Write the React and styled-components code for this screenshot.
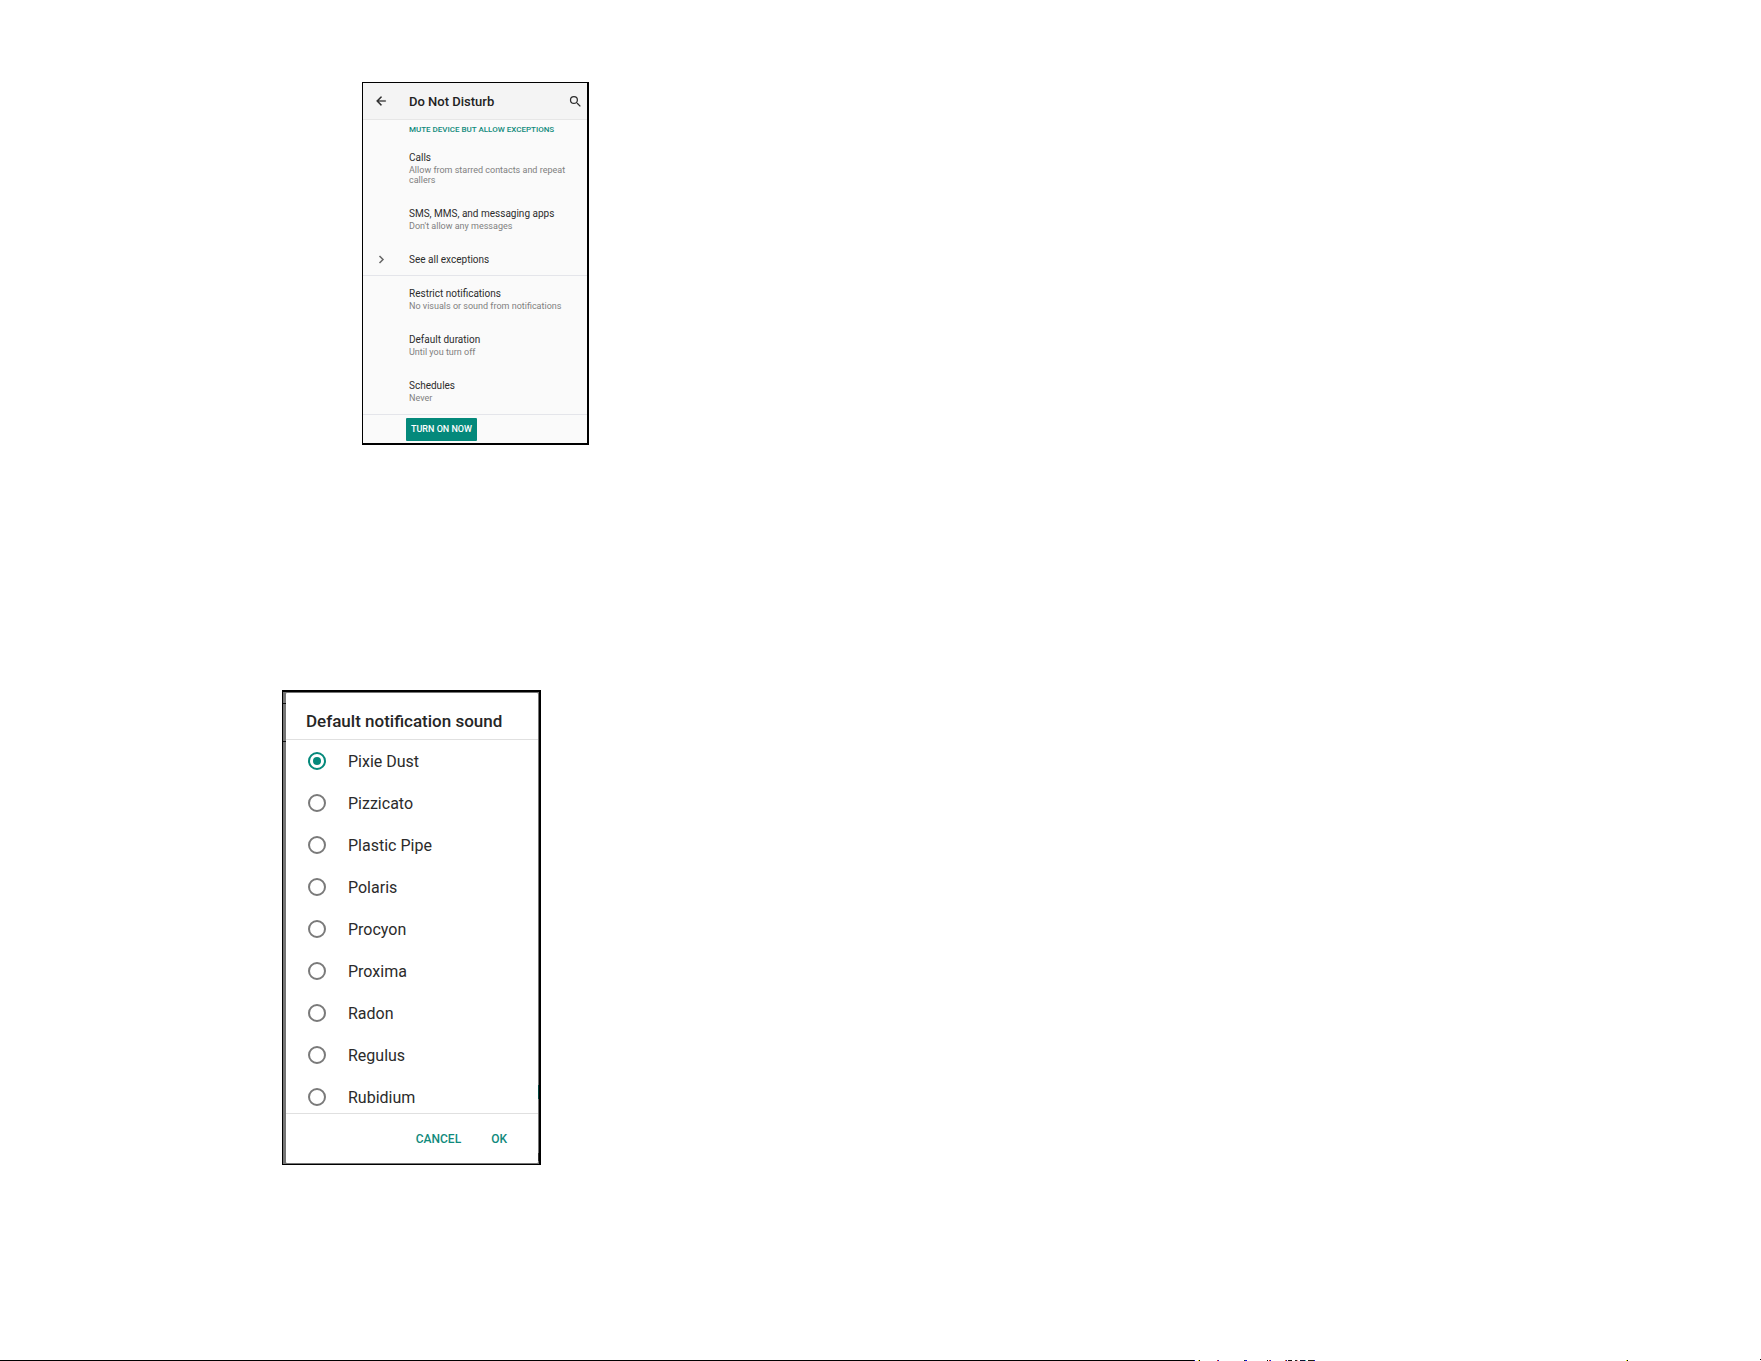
import React, { useState } from "react";
import styled, { createGlobalStyle } from "styled-components";

const GlobalStyle = createGlobalStyle`
  * { box-sizing: border-box; }
  body { margin: 0; background: #fff; font-family: Roboto, "Liberation Sans", sans-serif; }
`;

const Page = styled.main`
  display: flex;
  flex-direction: column;
  align-items: flex-start;
  min-height: 100vh;
  padding-top: 82px;
`;

const SettingsPanel = styled.section`
  width: 227px;
  margin-left: 362px;
  border: solid #000;
  border-width: 1px 2px 2px 1px;
  background: #fafafa;
  color: #2c2c2c;
`;

const AppBar = styled.header`
  display: flex;
  align-items: center;
  height: 37px;
  padding: 0 4px 0 11px;
  background: #f4f4f4;
  border-bottom: 1px solid #e6e6e6;
`;

const IconButton = styled.button`
  display: flex;
  padding: 0;
  border: 0;
  background: none;
  color: #2c2c2c;
`;

const BarTitle = styled.h1`
  flex: 1;
  margin: 0;
  padding: 2px 0 0 21px;
  font-size: 13px;
  line-height: 16px;
  font-weight: 500;
  color: #222;
`;

const SectionLabel = styled.h2`
  margin: 0;
  padding-left: 46px;
  font-size: 8px;
  line-height: 20px;
  font-weight: 500;
  color: #108a7c;
`;

const Setting = styled.button`
  display: grid;
  grid-template-columns: 46px 1fr;
  width: 100%;
  padding: 10px 12px ${(p) => (p.$compact ? 8 : 11)}px 0;
  border: 0;
  background: none;
  font-family: inherit;
  text-align: left;
  color: inherit;
`;

const Lead = styled.span`
  display: flex;
  align-items: center;
  padding-left: 14px;
  color: #666;
`;

const SettingName = styled.span`
  display: block;
  font-size: 10px;
  line-height: 15px;
`;

const SettingValue = styled.span`
  display: block;
  font-size: 9px;
  line-height: 10px;
  color: #808080;
`;

const Divider = styled.hr`
  height: 1px;
  margin: 0;
  border: 0;
  background: #e4e5ea;
`;

const PanelFooter = styled.footer`
  padding: 3px 0 2px 43px;
`;

const FilledButton = styled.button`
  display: block;
  height: 23px;
  padding: 0 5px;
  border: 0;
  border-radius: 1px;
  background: #04897b;
  color: #fff;
  font: 500 9px/23px Roboto, "Liberation Sans", sans-serif;
`;

const DialogFrame = styled.div`
  width: 259px;
  margin: 245px 0 0 282px;
  border: solid #000;
  border-width: 2px 2px 1px 1px;
  padding: 1px 1px 1px 3px;
  background:
    linear-gradient(#111, #111) 0 11px / 3px 1px no-repeat,
    linear-gradient(#111, #111) 0 49px / 3px 1px no-repeat,
    linear-gradient(#04463f, #04463f) 100% 393px / 1px 14px no-repeat,
    linear-gradient(#333, #333) 100% 461px / 1px 8px no-repeat,
    #757575;
`;

const Dialog = styled.form`
  border-radius: 1px;
  background: #fff;
  color: #2b2b2b;
`;

const DialogTitle = styled.h2`
  margin: 0;
  padding: 16px 20px 6px;
  font-size: 17px;
  line-height: 24px;
  font-weight: 500;
  color: #262626;
`;

const SoundList = styled.div`
  height: 375px;
  overflow: hidden;
  border: solid #e0e0e0;
  border-width: 1px 0;
`;

const SoundRow = styled.label`
  display: flex;
  align-items: center;
  gap: 22px;
  height: 42px;
  padding-left: 22px;
  font-size: 16px;
`;

const Radio = styled.input`
  appearance: none;
  display: grid;
  place-items: center;
  width: 18px;
  height: 18px;
  margin: 0;
  border: 2px solid #7a7a7a;
  border-radius: 50%;

  &:checked { border-color: #04897b; }
  &:checked::before {
    content: "";
    width: 8px;
    height: 8px;
    border-radius: 50%;
    background: #04897b;
  }
`;

const Actions = styled.footer`
  display: flex;
  justify-content: flex-end;
  gap: 30px;
  padding: 13px 31px 12px 0;
`;

const TextButton = styled.button`
  padding: 0;
  border: 0;
  background: none;
  color: #108a7c;
  font: 500 12px/24px Roboto, "Liberation Sans", sans-serif;
`;

const PageEdge = styled.div`
  display: flex;
  align-items: flex-end;
  width: 100%;
  height: 2px;
  margin-top: auto;
`;

const EdgeRule = styled.div`
  flex: 1;
  height: 1px;
  background: #000;
`;

const specks = [
  [0, 1, "#11a"], [4, 1, "#ee0"], [5, 1, "#000"], [23, 1, "#e31"], [24, 1, "#11d"],
  [50, 1, "#141"], [51, 2, "#11d"], [73, 1, "#000"], [75, 1, "#e31"],
  [76, 1, "#11d"], [91, 1, "#e61"], [92, 1, "#11a"], [94, 4, "#111"],
  [101, 2, "#222"], [103, 1, "#e99"], [106, 5, "#113"], [111, 1, "#3cc"],
  [114, 6, "#221"], [120, 1, "#11d"], [432, 1, "#ee0"], [433, 1, "#000"],
];

const settings = [
  { name: "Calls", value: "Allow from starred contacts and repeat callers" },
  { name: "SMS, MMS, and messaging apps", value: "Don't allow any messages" },
  { name: "See all exceptions", chevron: true },
  { name: "Restrict notifications", value: "No visuals or sound from notifications" },
  { name: "Default duration", value: "Until you turn off" },
  { name: "Schedules", value: "Never" },
];

const sounds = [
  "Pixie Dust", "Pizzicato", "Plastic Pipe", "Polaris", "Procyon",
  "Proxima", "Radon", "Regulus", "Rubidium",
];

function SettingItem({ name, value, chevron }) {
  return (
    <>
      <Setting type="button" $compact={chevron}>
        <Lead>
          {chevron && (
            <svg width="8" height="9" viewBox="0 0 8 9" fill="none" stroke="currentColor" strokeWidth="1.5" aria-hidden="true">
              <path d="M2.5 1 6 4.5 2.5 8" />
            </svg>
          )}
        </Lead>
        <span>
          <SettingName>{name}</SettingName>
          {value && <SettingValue>{value}</SettingValue>}
        </span>
      </Setting>
      {chevron && <Divider />}
    </>
  );
}

export default function App() {
  const [sound, setSound] = useState("Pixie Dust");
  return (
    <Page>
      <GlobalStyle />
      <SettingsPanel>
        <AppBar>
          <IconButton type="button" aria-label="Back">
            <svg width="14" height="14" viewBox="0 0 24 24" fill="currentColor">
              <path d="M20 11H7.83l5.59-5.59L12 4l-8 8 8 8 1.41-1.41L7.83 13H20v-2z" stroke="currentColor" strokeWidth=".5" />
            </svg>
          </IconButton>
          <BarTitle>Do Not Disturb</BarTitle>
          <IconButton type="button" aria-label="Search">
            <svg width="15" height="15" viewBox="0 0 24 24" fill="currentColor">
              <path d="M15.5 14h-.79l-.28-.27A6.47 6.47 0 0 0 16 9.5 6.5 6.5 0 1 0 9.5 16c1.61 0 3.09-.59 4.23-1.57l.27.28v.79l5 4.99L20.49 19l-4.99-5zm-6 0a4.5 4.5 0 1 1 0-9 4.5 4.5 0 0 1 0 9z" />
            </svg>
          </IconButton>
        </AppBar>
        <SectionLabel>MUTE DEVICE BUT ALLOW EXCEPTIONS</SectionLabel>
        {settings.map((s) => (
          <SettingItem key={s.name} {...s} />
        ))}
        <Divider />
        <PanelFooter>
          <FilledButton type="button">TURN ON NOW</FilledButton>
        </PanelFooter>
      </SettingsPanel>

      <DialogFrame>
        <Dialog>
          <DialogTitle>Default notification sound</DialogTitle>
          <SoundList role="radiogroup">
            {sounds.map((s) => (
              <SoundRow key={s}>
                <Radio type="radio" name="sound" checked={sound === s} onChange={() => setSound(s)} />
                {s}
              </SoundRow>
            ))}
          </SoundList>
          <Actions>
            <TextButton type="button">CANCEL</TextButton>
            <TextButton type="button">OK</TextButton>
          </Actions>
        </Dialog>
      </DialogFrame>

      <PageEdge>
        <EdgeRule />
        <svg width="567" height="2" viewBox="0 0 567 2" shapeRendering="crispEdges" aria-hidden="true">
          {specks.map(([x, w, fill]) => (
            <rect key={x} x={x} y="1" width={w} height="1" fill={fill} />
          ))}
          <rect x="566" y="0" width="1" height="1" fill="#000" />
        </svg>
      </PageEdge>
    </Page>
  );
}
